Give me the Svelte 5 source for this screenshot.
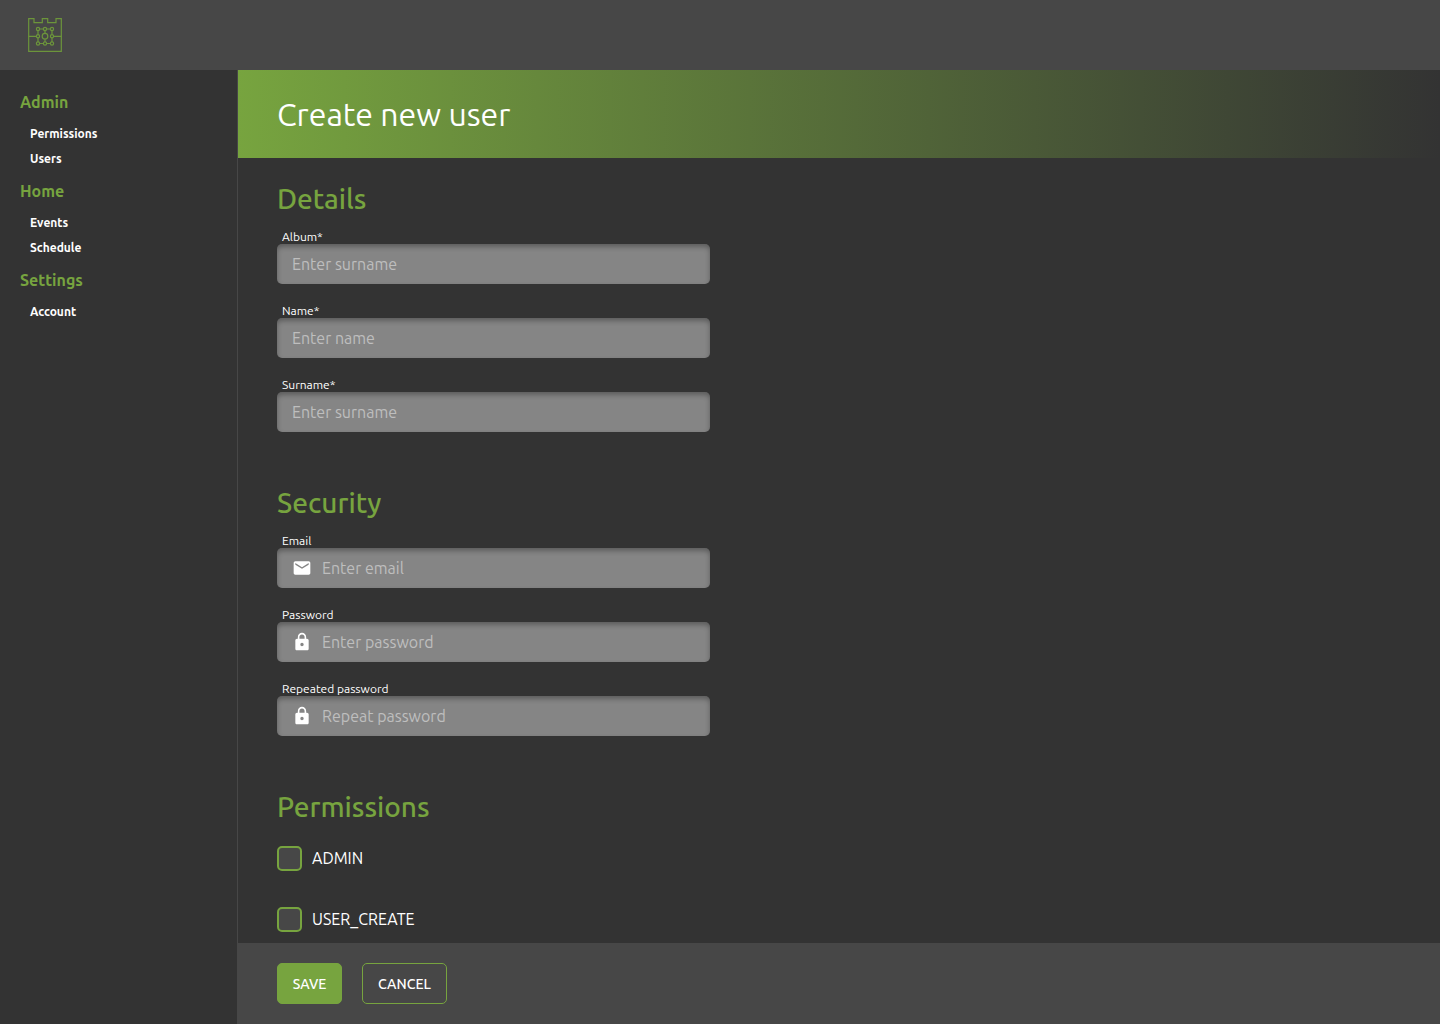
<script>
  const menu = [
    { title: 'Admin', items: ['Permissions', 'Users'] },
    { title: 'Home', items: ['Events', 'Schedule'] },
    { title: 'Settings', items: ['Account'] }
  ];

  const mail =
    'M20 4H4c-1.1 0-1.99.9-1.99 2L2 18c0 1.1.9 2 2 2h16c1.1 0 2-.9 2-2V6c0-1.1-.9-2-2-2zm0 4l-8 5-8-5V6l8 5 8-5v2z';
  const lock =
    'M18 8h-1V6c0-2.76-2.24-5-5-5S7 3.24 7 6v2H6c-1.1 0-2 .9-2 2v10c0 1.1.9 2 2 2h12c1.1 0 2-.9 2-2V10c0-1.1-.9-2-2-2zm-6 9c-1.1 0-2-.9-2-2s.9-2 2-2 2 .9 2 2-.9 2-2 2zm3.1-9H8.9V6c0-1.71 1.39-3.1 3.1-3.1 1.71 0 3.1 1.39 3.1 3.1v2z';

  const sections = [
    {
      title: 'Details',
      fields: [
        { id: 'album', label: 'Album*', hint: 'Enter surname', type: 'text' },
        { id: 'name', label: 'Name*', hint: 'Enter name', type: 'text' },
        { id: 'surname', label: 'Surname*', hint: 'Enter surname', type: 'text' }
      ]
    },
    {
      title: 'Security',
      fields: [
        { id: 'email', label: 'Email', hint: 'Enter email', type: 'email', icon: mail },
        { id: 'password', label: 'Password', hint: 'Enter password', type: 'password', icon: lock },
        { id: 'repeat', label: 'Repeated password', hint: 'Repeat password', type: 'password', icon: lock }
      ]
    }
  ];

  const permissions = ['ADMIN', 'USER_CREATE'];
  const nodes = [
    [11, 12], [18, 12], [25, 12],
    [11, 19.2], [25, 19.2],
    [11, 26.5], [18, 26.5], [25, 26.5]
  ];
</script>

<div class="app">
  <header>
    <a class="logo" href="#home" aria-label="Home">
      <svg viewBox="0 0 36 36" width="36" height="36">
        <path d="M1.7 1.7H7v4h8.3v-4h5.4v4H29v-4h5.3v32.6H1.7z" />
        <path d="M1.7 19.300h7.700M26.600 19.300h7.700M12.600 12h3.800M19.600 12h3.800M12.600 26.500h3.800M19.600 26.500h3.800M11 13.600v4M11 20.800v4.100M25 13.600v4M25 20.800v4.100M18 13.600v2.800M18 22v2.900" />
        <circle cx="18" cy="19.200" r="2.800" />
        {#each nodes as [x, y]}
          <circle cx={x} cy={y} r="1.600" />
        {/each}
      </svg>
    </a>
  </header>

  <div class="body">
    <nav>
      {#each menu as group}
        <div class="group">
          <h3>{group.title}</h3>
          <ul>
            {#each group.items as item}
              <li><a href={'#' + item.toLowerCase()}>{item}</a></li>
            {/each}
          </ul>
        </div>
      {/each}
    </nav>

    <form>
      <div class="scroll">
        <div class="banner"><h1>Create new user</h1></div>
        <div class="content">
          {#each sections as section}
            <section>
              <h2>{section.title}</h2>
              {#each section.fields as field}
                <div class="field">
                  <label for={field.id}>{field.label}</label>
                  <div class="box">
                    {#if field.icon}
                      <svg viewBox="0 0 24 24" width="20" height="20"><path d={field.icon} /></svg>
                    {/if}
                    <input id={field.id} type={field.type} placeholder={field.hint} />
                  </div>
                </div>
              {/each}
            </section>
          {/each}
          <section>
            <h2>Permissions</h2>
            <div class="checks">
              {#each permissions as name}
                <label class="check"><input type="checkbox" />{name}</label>
              {/each}
            </div>
          </section>
        </div>
      </div>
      <footer>
        <button class="save" type="button">SAVE</button>
        <button class="cancel" type="button">CANCEL</button>
      </footer>
    </form>
  </div>
</div>

<style>
  :global(body) {
    margin: 0;
    background: #333;
  }
  .app {
    height: 100vh;
    display: flex;
    flex-direction: column;
    color: #fff;
    font-family: Ubuntu, 'Noto Sans', sans-serif;
    font-size: 16px;
  }
  .app :where(*) {
    box-sizing: border-box;
  }
  h1, h2, h3, ul {
    margin: 0;
    padding: 0;
  }
  header {
    flex: none;
    height: 70px;
    padding: 0 27px;
    display: flex;
    align-items: center;
    background: #474747;
  }
  .logo {
    display: flex;
  }
  .logo svg {
    fill: none;
    stroke: #6c953b;
    stroke-width: 1.2;
  }
  .body {
    flex: 1;
    min-height: 0;
    display: flex;
  }
  nav {
    flex: none;
    width: 238px;
    padding: 20px;
    border-right: 1px solid #474747;
    display: flex;
    flex-direction: column;
    gap: 8px;
  }
  h3 {
    margin-bottom: 7px;
    font-size: 16px;
    line-height: 24px;
    font-weight: 700;
    color: #77a43f;
  }
  ul {
    list-style: none;
    padding-left: 10px;
  }
  li {
    font-size: 12px;
    line-height: 25px;
    font-weight: 700;
  }
  li a {
    color: inherit;
    text-decoration: none;
  }
  form {
    flex: 1;
    min-width: 0;
    display: flex;
    flex-direction: column;
  }
  .scroll {
    flex: 1;
    min-height: 0;
    overflow: hidden;
  }
  .banner {
    padding: 22px 39px;
    background: linear-gradient(90deg, #77a43f, #333);
  }
  h1 {
    font-size: 32px;
    line-height: 44px;
    font-weight: 400;
  }
  .content {
    padding: 24px 39px;
    display: flex;
    flex-direction: column;
    gap: 54px;
  }
  section {
    display: flex;
    flex-direction: column;
    gap: 20px;
  }
  h2 {
    margin-bottom: -6px;
    font-size: 28px;
    line-height: 34px;
    font-weight: 500;
    color: #77a43f;
  }
  .field {
    max-width: 433px;
  }
  .field label {
    display: block;
    padding-left: 5px;
    font-size: 12px;
    line-height: 14px;
  }
  .box {
    height: 40px;
    padding: 0 15px;
    display: flex;
    align-items: center;
    gap: 10px;
    border-radius: 5px;
    background: #858585;
    box-shadow: inset 0 3px 5px rgba(0, 0, 0, 0.3);
  }
  .box svg {
    flex: none;
    fill: #fff;
  }
  .box input {
    flex: 1;
    min-width: 0;
    padding: 0;
    border: 0;
    outline: 0;
    background: none;
    color: #fff;
    font: inherit;
  }
  .box input::placeholder {
    color: #bebebe;
    opacity: 1;
  }
  .checks {
    padding-top: 8px;
    display: flex;
    flex-direction: column;
    align-items: flex-start;
    gap: 36px;
  }
  .check {
    display: flex;
    align-items: center;
    gap: 10px;
    line-height: 25px;
  }
  .check input {
    appearance: none;
    width: 25px;
    height: 25px;
    margin: 0;
    border: 2px solid #77a43f;
    border-radius: 5px;
    background: #474747;
  }
  .check input:checked {
    background: #77a43f;
  }
  footer {
    flex: none;
    padding: 20px 39px;
    display: flex;
    gap: 20px;
    background: #474747;
  }
  button {
    min-width: 65px;
    height: 41px;
    padding: 0 14px;
    border: 1px solid #77a43f;
    border-radius: 5px;
    font: 500 14px Ubuntu, 'Noto Sans', sans-serif;
    color: #fff;
    background: none;
  }
  .save {
    background: #77a43f;
  }
  .cancel {
    padding: 0 15px;
  }
</style>
